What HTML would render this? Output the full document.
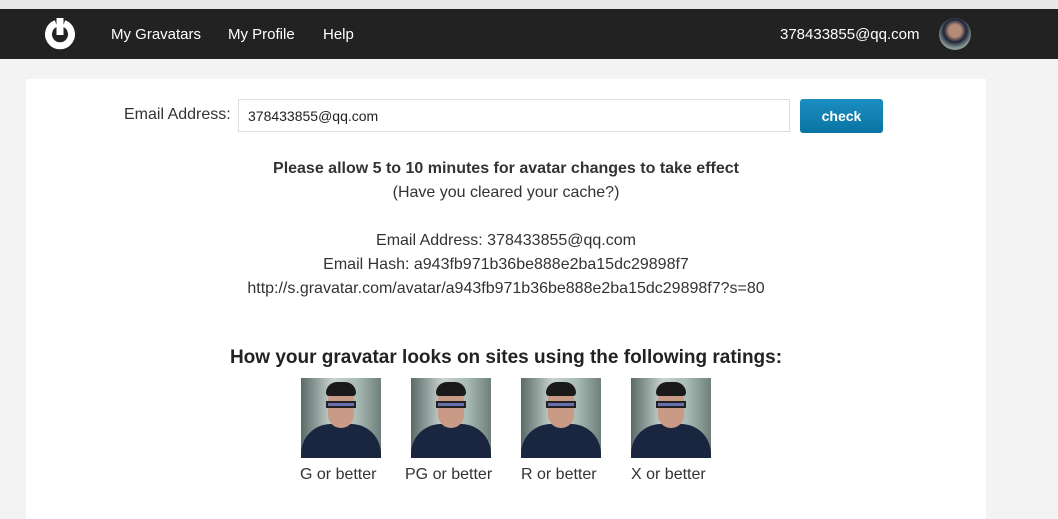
<!DOCTYPE html>
<html><head><meta charset="utf-8"><style>
*{margin:0;padding:0;box-sizing:border-box}
body{width:1058px;height:511px;overflow:hidden;background:#f3f3f3;font-family:"Liberation Sans",sans-serif;color:#333;position:relative}
.bm{position:absolute;left:0;top:0;width:1058px;height:9px;background:#e8e8e8}
.nav{position:absolute;left:0;top:9px;width:1058px;height:50px;background:#222;color:#fff;font-size:15px}
.nav span{position:absolute;top:17px}
.card{position:absolute;left:26px;top:79px;width:960px;height:440px;background:#fff}
.t{position:absolute;width:960px;left:26px;text-align:center;font-size:16px;color:#333}
.av{position:absolute;top:378px;width:80px;height:80px;overflow:hidden;background:linear-gradient(90deg,#5a6a68,#c8d4cf 40%,#a9bbb4 70%,#6f7f7b)}
.av .b{position:absolute;left:0;bottom:0;width:80px;height:34px;background:#1a2540;border-radius:30px 30px 0 0}
.av .f{position:absolute;left:27px;top:10px;width:26px;height:40px;background:#c99a86;border-radius:12px 12px 14px 14px}
.av .h{position:absolute;left:25px;top:4px;width:30px;height:14px;background:#1a1a1a;border-radius:14px 14px 4px 4px}
.av .g{position:absolute;left:25px;top:23px;width:30px;height:7px;border:2px solid #222;background:#6a6fae}
.lb{position:absolute;top:466px;font-size:16px;color:#333}
</style></head><body>
<div class="bm"></div>
<div class="nav">
<svg style="position:absolute;left:42px;top:7px" width="36" height="36" viewBox="0 0 36 36"><path d="M22 7.5A11.5 11.5 0 1 1 14 7.5" fill="none" stroke="#fff" stroke-width="7"/><rect x="14.5" y="2" width="7" height="17" fill="#fff"/></svg>
<span style="left:111px">My Gravatars</span><span style="left:228px">My Profile</span><span style="left:323px">Help</span>
<span style="left:780px">378433855@qq.com</span>
<div style="position:absolute;left:939px;top:9px;width:32px;height:32px;border-radius:50%;background:radial-gradient(circle at 50% 40%,#b48a78 0 25%,#1c2438 45%,#8a9a96 70%)"></div>
</div>
<div class="card"></div>
<div style="position:absolute;left:124px;top:106px;font-size:16px;color:#333">Email Address:</div>
<div style="position:absolute;left:238px;top:99px;width:552px;height:33px;border:1px solid #ddd;font-size:14px;padding:8px 9px;color:#222">378433855@qq.com</div>
<div style="position:absolute;left:800px;top:99px;width:83px;height:34px;background:linear-gradient(#1b8ec0,#0a74a3);border-radius:3px;color:#fff;font-size:14px;font-weight:bold;text-align:center;line-height:34px">check</div>
<div class="t" style="top:160px;font-weight:bold">Please allow 5 to 10 minutes for avatar changes to take effect</div>
<div class="t" style="top:184px">(Have you cleared your cache?)</div>
<div class="t" style="top:232px">Email Address: 378433855@qq.com</div>
<div class="t" style="top:256px">Email Hash: a943fb971b36be888e2ba15dc29898f7</div>
<div class="t" style="top:280px">http://s.gravatar.com/avatar/a943fb971b36be888e2ba15dc29898f7?s=80</div>
<div class="t" style="top:347px;font-size:19px;font-weight:bold;color:#222">How your gravatar looks on sites using the following ratings:</div>
<div class="av" style="left:301px"><div class="b"></div><div class="f"></div><div class="h"></div><div class="g"></div></div>
<div class="av" style="left:411px"><div class="b"></div><div class="f"></div><div class="h"></div><div class="g"></div></div>
<div class="av" style="left:521px"><div class="b"></div><div class="f"></div><div class="h"></div><div class="g"></div></div>
<div class="av" style="left:631px"><div class="b"></div><div class="f"></div><div class="h"></div><div class="g"></div></div>
<div class="lb" style="left:300px">G or better</div>
<div class="lb" style="left:405px">PG or better</div>
<div class="lb" style="left:521px">R or better</div>
<div class="lb" style="left:631px">X or better</div>
</body></html>
